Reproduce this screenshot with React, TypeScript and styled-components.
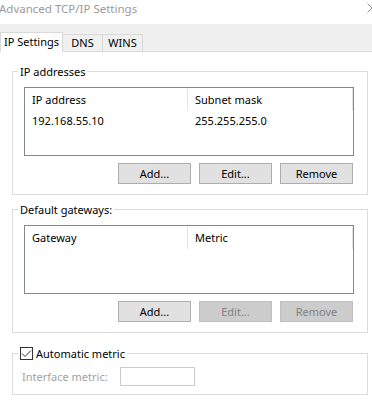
import React from "react";
import styled, { createGlobalStyle } from "styled-components";

const Global = createGlobalStyle`
  html, body { margin: 0; padding: 0; background: #fff; }
  body {
    font-family: "Noto Sans", "DejaVu Sans", sans-serif;
    font-size: 11px;
    color: #000;
  }
  #root { width: 372px; height: 418px; overflow: hidden; }
`;

const Window = styled.div`
  width: 372px;
  height: 418px;
  background: #fff;
  overflow: hidden;
  display: flex;
  flex-direction: column;
`;

const TitleBar = styled.div`
  height: 24px;
  flex: none;
  display: flex;
  align-items: flex-start;
  justify-content: space-between;
`;

const Title = styled.span`
  margin-left: -1px;
  margin-top: 1px;
  font-size: 11.5px;
  line-height: 16px;
  color: #9a9a9a;
  white-space: nowrap;
`;

const Close = styled.svg`
  flex: none;
  margin-top: 3px;
  margin-right: -5px;
`;

const TabStrip = styled.div`
  height: 28px;
  flex: none;
  box-sizing: border-box;
  background: #f0f0f0;
  border-bottom: 1px solid #d9d9d9;
  display: flex;
  align-items: flex-end;
`;

const Tab = styled.div<{ $active?: boolean; $w: number }>`
  position: relative;
  z-index: 1;
  box-sizing: border-box;
  width: ${(p) => p.$w}px;
  height: ${(p) => (p.$active ? 20 : 17)}px;
  margin-bottom: ${(p) => (p.$active ? -1 : 0)}px;
  background: ${(p) => (p.$active ? "#fff" : "#f0f0f0")};
  border: 1px solid #d9d9d9;
  border-bottom: none;
  border-left: ${(p) => (p.$active ? "1px solid #d9d9d9" : "none")};
  text-align: center;
  line-height: ${(p) => (p.$active ? 17 : 15)}px;
  white-space: nowrap;
`;

const Panel = styled.div`
  padding: 11px 0 0 12px;
  display: flex;
  flex-direction: column;
`;

const Group = styled.fieldset<{ $gap: number }>`
  margin: ${(p) => p.$gap}px 0 0 0;
  padding: 0;
  width: 356px;
  box-sizing: border-box;
  min-width: 0;
  border: 1px solid #dcdcdc;
`;

const Legend = styled.legend`
  margin-left: 5px;
  padding: 0 2px;
  height: 17px;
  line-height: 17px;
  font-size: 11px;
`;

const LegendInner = styled.span`
  display: inline-flex;
  align-items: center;
  gap: 3px;
  height: 17px;
  vertical-align: top;
`;

const CheckBox = styled.span`
  width: 13px;
  height: 13px;
  box-sizing: border-box;
  border: 1px solid #333;
  background: #fff;
  display: inline-flex;
`;

const GroupBody = styled.div`
  padding: 7px 13px 10px 11px;
  display: flex;
  flex-direction: column;
`;

const ListView = styled.div`
  height: 69px;
  box-sizing: border-box;
  border: 1px solid #828790;
  background: #fff;
`;

const Row = styled.div<{ $header?: boolean }>`
  display: flex;
  height: ${(p) => (p.$header ? 23 : 20)}px;
  line-height: ${(p) => (p.$header ? 23 : 20)}px;
`;

const Cell = styled.div<{ $w: number; $divider?: boolean }>`
  width: ${(p) => p.$w}px;
  box-sizing: border-box;
  padding-left: 7px;
  border-right: 1px solid ${(p) => (p.$divider ? "#e5e5e5" : "transparent")};
  white-space: nowrap;
  overflow: hidden;
`;

const ButtonRow = styled.div`
  display: flex;
  justify-content: flex-end;
  gap: 8px;
  margin-top: 7px;
  padding-right: 1px;
`;

const Button = styled.button<{ $off?: boolean }>`
  width: 73px;
  height: 21px;
  padding: 0;
  box-sizing: border-box;
  font-family: inherit;
  font-size: 11px;
  line-height: 19px;
  background: ${(p) => (p.$off ? "#cccccc" : "#e1e1e1")};
  border: 1px solid ${(p) => (p.$off ? "#bfbfbf" : "#adadad")};
  color: ${(p) => (p.$off ? "#838383" : "#000")};
  border-radius: 0;
`;

const MetricBody = styled.div`
  padding: 5px 0 8px 9px;
  display: flex;
  align-items: center;
`;

const MetricLabel = styled.span`
  width: 98px;
  color: #a2a2a2;
  line-height: 19px;
  white-space: nowrap;
`;

const MetricInput = styled.div`
  width: 75px;
  height: 19px;
  box-sizing: border-box;
  border: 1px solid #cccccc;
  background: #fff;
`;

type Col = { w: number; label: string };

function AddressList({ cols, rows }: { cols: Col[]; rows: string[][] }) {
  return (
    <ListView>
      <Row $header>
        {cols.map((c) => (
          <Cell key={c.label} $w={c.w} $divider>
            {c.label}
          </Cell>
        ))}
      </Row>
      {rows.map((r, i) => (
        <Row key={i}>
          {r.map((v, j) => (
            <Cell key={j} $w={cols[j].w}>
              {v}
            </Cell>
          ))}
        </Row>
      ))}
    </ListView>
  );
}

function Buttons({ off }: { off?: boolean }) {
  return (
    <ButtonRow>
      <Button>Add...</Button>
      <Button $off={off}>Edit...</Button>
      <Button $off={off}>Remove</Button>
    </ButtonRow>
  );
}

export default function App() {
  return (
    <>
      <Global />
      <Window>
        <TitleBar>
          <Title>Advanced TCP/IP Settings</Title>
          <Close width="10" height="10" viewBox="0 0 10 10">
            <path d="M0.5 0.5 L9.5 9.5 M9.5 0.5 L0.5 9.5" stroke="#8a8a8a" strokeWidth="1" fill="none" />
          </Close>
        </TitleBar>
        <TabStrip>
          <Tab $active $w={63}>IP Settings</Tab>
          <Tab $w={40}>DNS</Tab>
          <Tab $w={40}>WINS</Tab>
        </TabStrip>
        <Panel>
          <Group $gap={0}>
            <Legend>IP addresses</Legend>
            <GroupBody>
              <AddressList
                cols={[
                  { w: 163, label: "IP address" },
                  { w: 165, label: "Subnet mask" },
                ]}
                rows={[["192.168.55.10", "255.255.255.0"]]}
              />
              <Buttons />
            </GroupBody>
          </Group>
          <Group $gap={6}>
            <Legend>Default gateways:</Legend>
            <GroupBody>
              <AddressList
                cols={[
                  { w: 163, label: "Gateway" },
                  { w: 165, label: "Metric" },
                ]}
                rows={[]}
              />
              <Buttons off />
            </GroupBody>
          </Group>
          <Group $gap={12}>
            <Legend>
              <LegendInner>
                <CheckBox>
                  <svg width="11" height="11" viewBox="0 0 11 11">
                    <path d="M1 5.5 L4 8.5 L10 2.5" stroke="#333" strokeWidth="1" fill="none" />
                  </svg>
                </CheckBox>
                Automatic metric
              </LegendInner>
            </Legend>
            <MetricBody>
              <MetricLabel>Interface metric:</MetricLabel>
              <MetricInput />
            </MetricBody>
          </Group>
        </Panel>
      </Window>
    </>
  );
}
